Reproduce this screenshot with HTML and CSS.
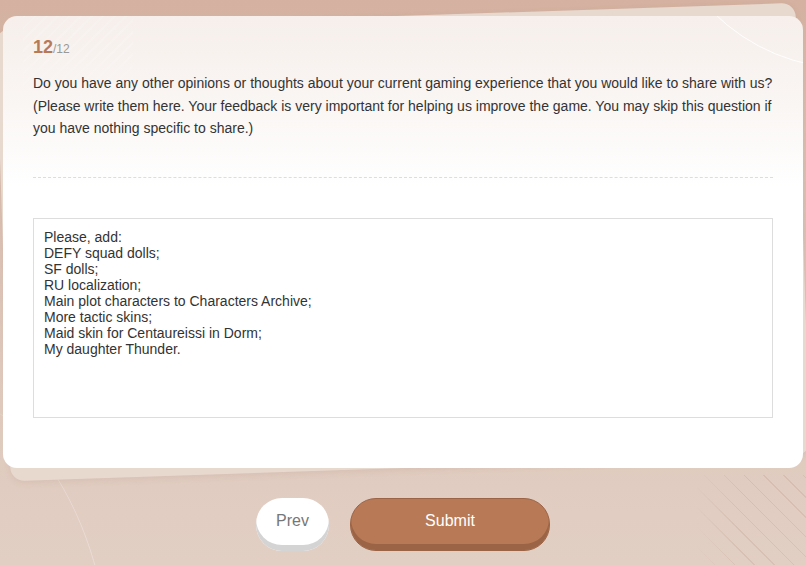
FILE: index.html
```html
<!DOCTYPE html>
<html>
<head>
    <title>Survey</title>
    <link rel="stylesheet" href="styles.css">
</head>
<body>
    <div class="page">
        <div class="deco-lines"></div>
        <div class="deco-curve"></div>

        <div class="stack">
            <div class="card-back"></div>
            <div class="card">
                <div class="card-arc"></div>
                <div class="card-stripes"></div>
                <div class="counter"><span class="current">12</span><span class="total">/12</span></div>
                <p class="question">Do you have any other opinions or thoughts about your current gaming experience that you would like to share with us? (Please write them here. Your feedback is very important for helping us improve the game. You may skip this question if you have nothing specific to share.)</p>
                <div class="divider"></div>
                <textarea class="answer">Please, add:
DEFY squad dolls;
SF dolls;
RU localization;
Main plot characters to Characters Archive;
More tactic skins;
Maid skin for Centaureissi in Dorm;
My daughter Thunder.</textarea>
            </div>
        </div>

        <div class="actions">
            <button class="btn btn-prev">Prev</button>
            <button class="btn btn-submit">Submit</button>
        </div>
    </div>
</body>
</html>
```

FILE: styles.css
```css
html, body {
    margin: 0;
    padding: 0;
    height: 100%;
}

body {
    font-family: "Liberation Sans", Arial, sans-serif;
    background: linear-gradient(180deg, #d4b1a0 0%, #dcc3b6 45%, #e2cfc4 100%);
    overflow: hidden;
}

.page {
    position: relative;
    height: 565px;
    padding-top: 16px;
    box-sizing: border-box;
    overflow: hidden;
}

/* decorative lines on the background */
.deco-lines {
    position: absolute;
    right: 0;
    bottom: 0;
    width: 110px;
    height: 90px;
    background: repeating-linear-gradient(45deg, transparent 0 13px, rgba(190, 160, 145, 0.3) 13px 14px);
    -webkit-mask-image: linear-gradient(90deg, transparent, #000 40%);
}

.deco-curve {
    position: absolute;
    left: -300px;
    top: 380px;
    width: 410px;
    height: 600px;
    border-right: 1px solid rgba(255, 255, 255, 0.3);
    border-radius: 50%;
}

.stack {
    position: relative;
    width: 800px;
    margin: 0 auto;
}

.card-back {
    position: absolute;
    inset: 0;
    background: #e8d9cf;
    border-radius: 14px;
    transform: rotate(-1.9deg);
    box-shadow: 0 2px 6px rgba(150, 110, 90, 0.12);
}

.card {
    position: relative;
    background: linear-gradient(180deg, #f6efeb 0px, #faf6f4 90px, #ffffff 170px);
    border-radius: 14px;
    padding: 19px 30px 50px;
    overflow: hidden;
}

.card-arc {
    position: absolute;
    right: -239px;
    top: -333px;
    width: 384px;
    height: 384px;
    border: 1px solid rgba(255, 255, 255, 0.9);
    border-radius: 50%;
}

.card-stripes {
    position: absolute;
    left: 20px;
    top: 0;
    width: 110px;
    height: 150px;
    background: repeating-linear-gradient(-45deg, transparent 0 6px, rgba(255, 255, 255, 0.18) 6px 8px);
    -webkit-mask-image: linear-gradient(180deg, #000, transparent);
}

.counter {
    position: relative;
    line-height: 24px;
}

.current {
    font-size: 18px;
    font-weight: bold;
    color: #b87a56;
}

.total {
    font-size: 12px;
    color: #999999;
}

.question {
    position: relative;
    margin: 11px 0 0;
    font-size: 14px;
    line-height: 22.5px;
    color: #333333;
}

.divider {
    margin-top: 37px;
    border-top: 1px dashed #dddddd;
}

.answer {
    display: block;
    box-sizing: border-box;
    width: 100%;
    height: 200px;
    margin-top: 40px;
    padding: 10px;
    border: 1px solid #dddddd;
    font-family: "Liberation Sans", Arial, sans-serif;
    font-size: 14px;
    line-height: 16px;
    color: #333333;
    resize: none;
    outline: none;
}

.actions {
    display: flex;
    justify-content: center;
    gap: 21px;
    margin-top: 30px;
}

.btn {
    height: 53px;
    border-radius: 26px;
    font-family: "Liberation Sans", Arial, sans-serif;
    font-size: 16px;
    padding: 0 0 6px;
    cursor: pointer;
}

.btn-prev {
    width: 73px;
    background: #ffffff;
    color: #777777;
    border: none;
    box-shadow: inset 0 -6px 0 #d4d4d4;
}

.btn-submit {
    width: 200px;
    background: #b87a56;
    color: #ffffff;
    border: 1px solid #9c6446;
    box-shadow: inset 0 -6px 0 #9c6446;
}
```
